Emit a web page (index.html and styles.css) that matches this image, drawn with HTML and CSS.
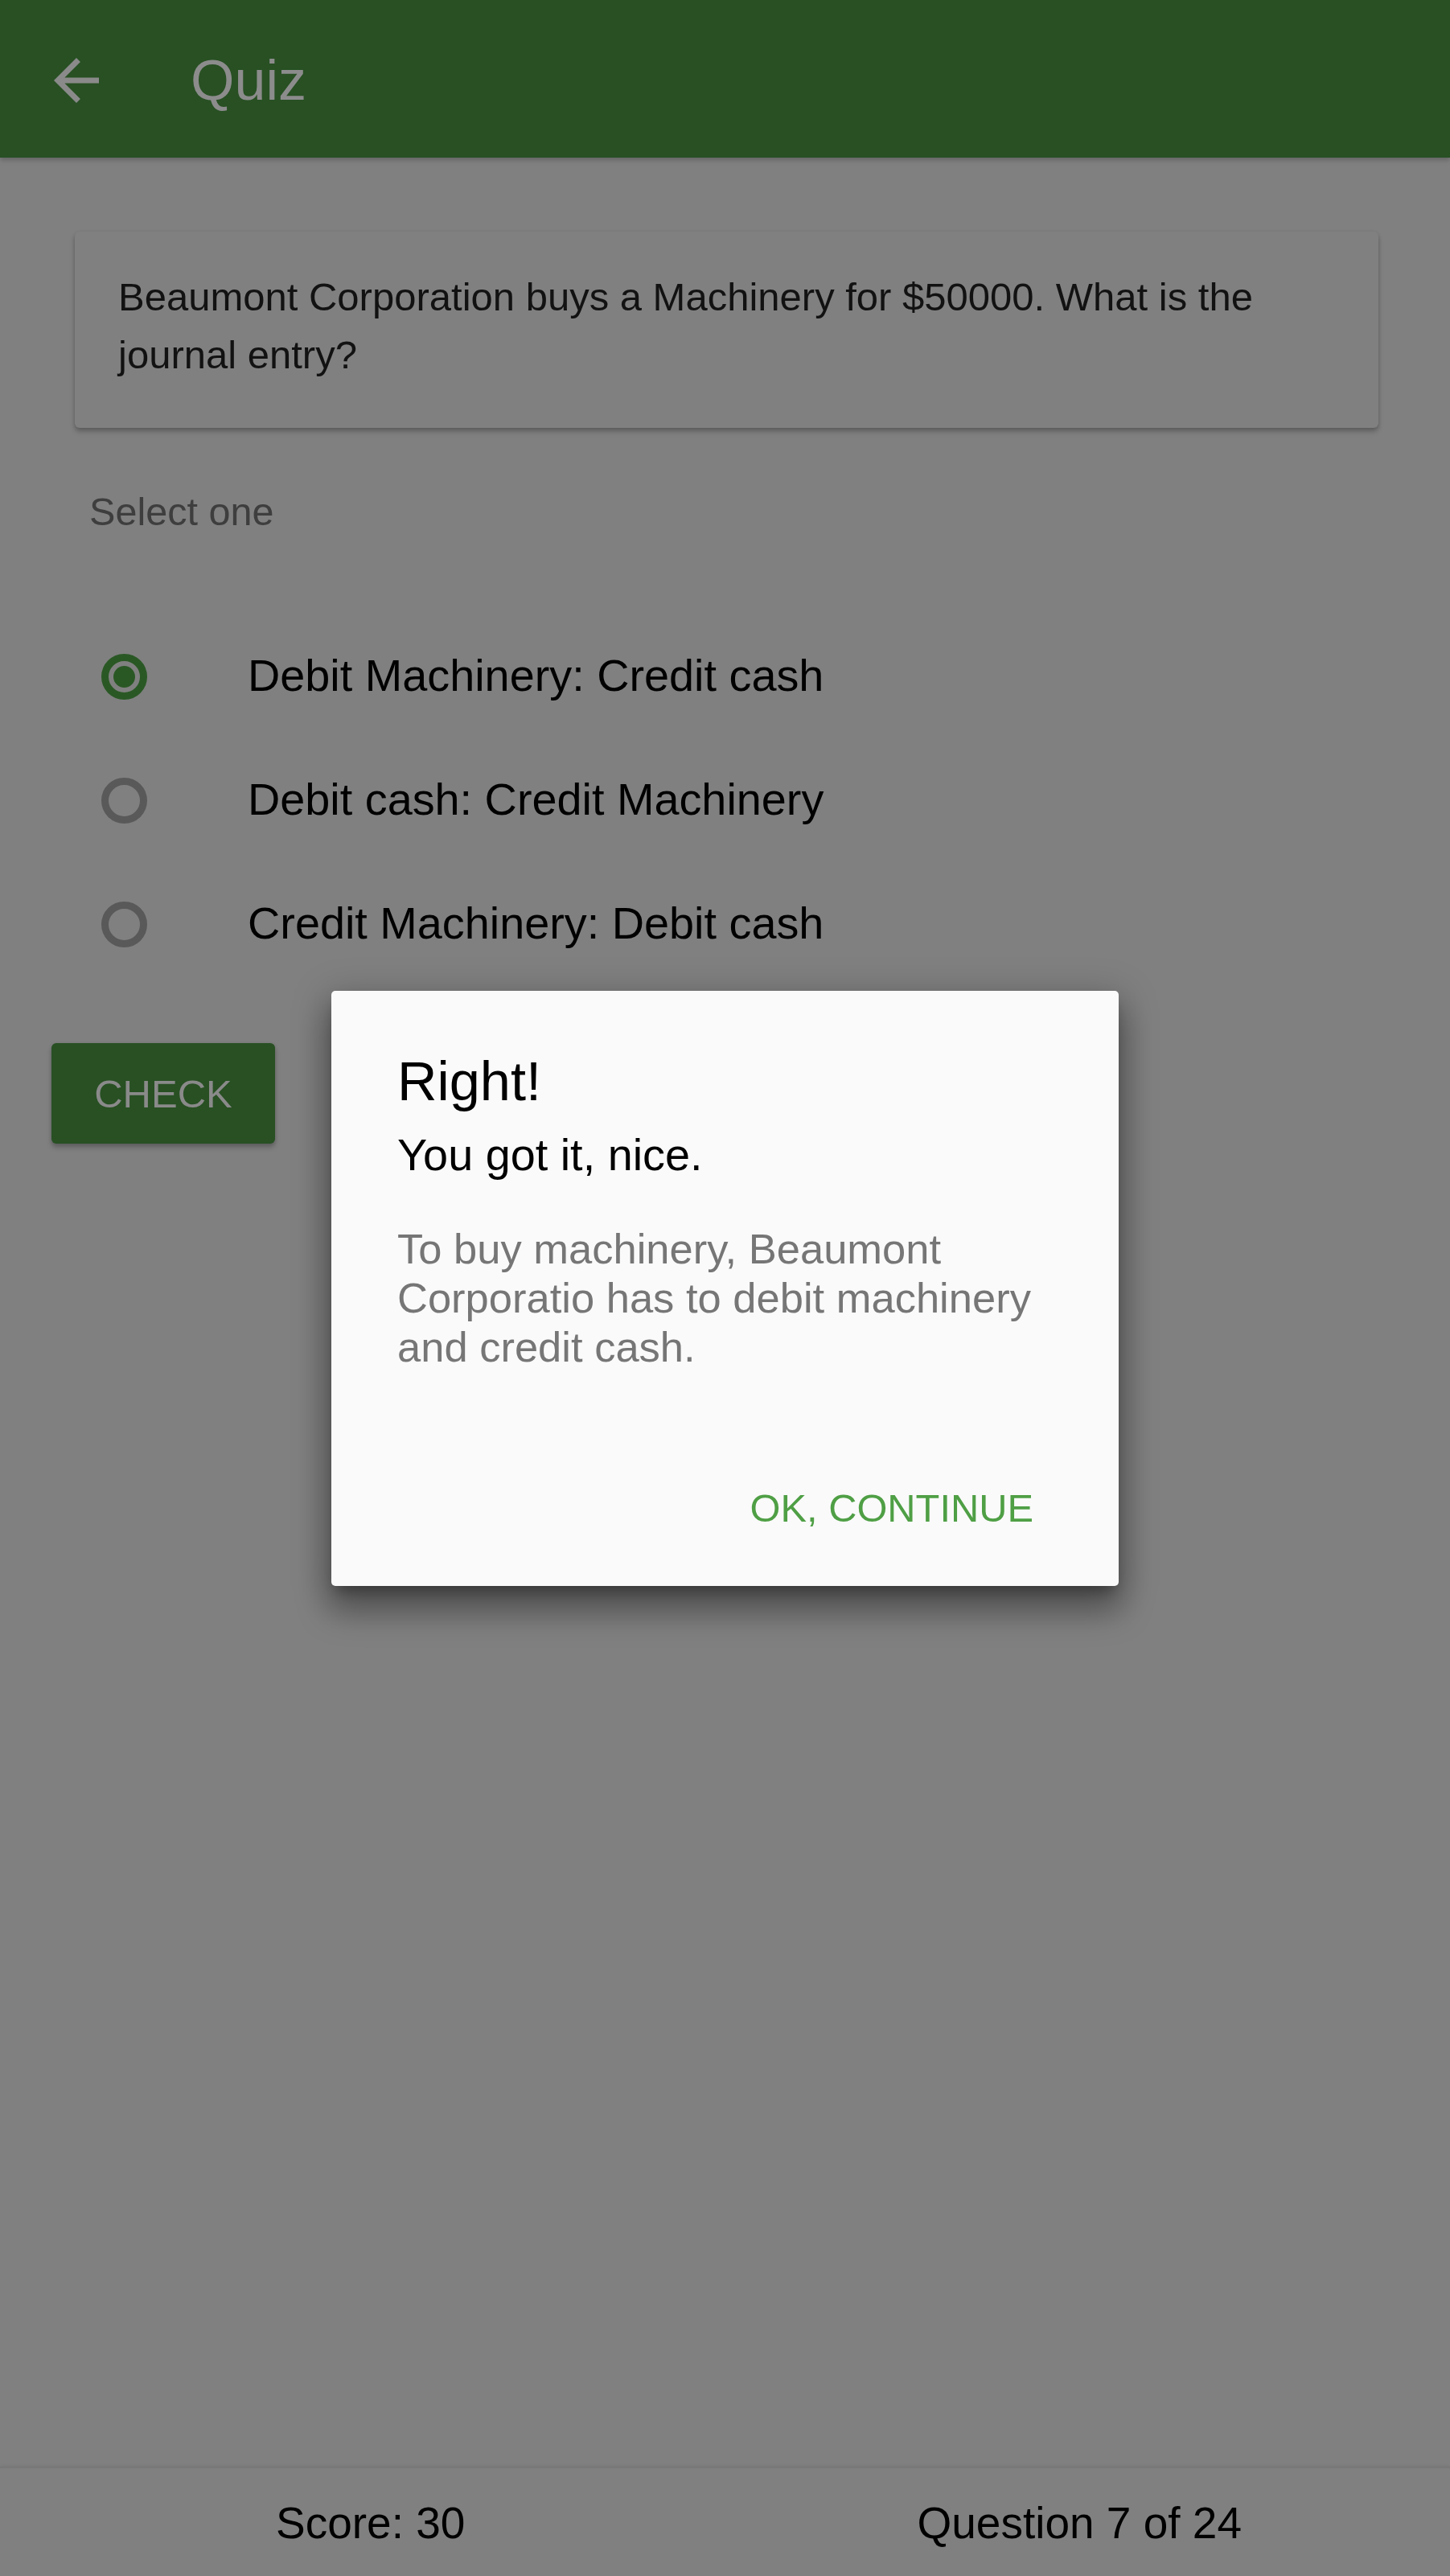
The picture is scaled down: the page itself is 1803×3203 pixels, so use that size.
FILE: index.html
```html
<!DOCTYPE html>
<html lang="en">
<head>
<meta charset="utf-8">
<title>Quiz</title>
<link rel="stylesheet" href="styles.css">
</head>
<body>
<div class="app">
  <header class="toolbar">
    <svg class="back-icon" viewBox="0 0 24 24" width="84" height="84" aria-hidden="true">
      <path d="M20 11H7.83l5.59-5.59L12 4l-8 8 8 8 1.41-1.41L7.83 13H20v-2z" fill="currentColor"/>
    </svg>
    <h1 class="toolbar-title">Quiz</h1>
  </header>

  <main class="content">
    <section class="question-card">
      <p class="question-text">Beaumont Corporation buys a Machinery for $50000. What is the journal entry?</p>
    </section>

    <p class="select-label">Select one</p>

    <ul class="options">
      <li class="option">
        <span class="radio radio-checked"><span class="radio-dot"></span></span>
        <span class="option-text">Debit Machinery: Credit cash</span>
      </li>
      <li class="option">
        <span class="radio"></span>
        <span class="option-text">Debit cash: Credit Machinery</span>
      </li>
      <li class="option">
        <span class="radio"></span>
        <span class="option-text">Credit Machinery: Debit cash</span>
      </li>
    </ul>

    <button class="check-button" type="button">CHECK</button>
  </main>

  <footer class="footer">
    <span class="footer-item">Score: 30</span>
    <span class="footer-item">Question 7 of 24</span>
  </footer>
</div>

<div class="backdrop">
  <div class="dialog" role="dialog">
    <h2 class="dialog-title">Right!</h2>
    <p class="dialog-subtitle">You got it, nice.</p>
    <p class="dialog-body">To buy machinery, Beaumont Corporatio has to debit machinery and credit cash.</p>
    <div class="dialog-actions">
      <button class="dialog-button" type="button">OK, CONTINUE</button>
    </div>
  </div>
</div>
</body>
</html>
```

FILE: styles.css
```css
* {
  box-sizing: border-box;
}

html, body {
  margin: 0;
  padding: 0;
}

body {
  font-family: "Liberation Sans", Arial, sans-serif;
  background: #808080;
  color: #000;
}

.app {
  display: flex;
  flex-direction: column;
  min-height: 100vh;
}

/* Toolbar */
.toolbar {
  height: 196px;
  background: #285023;
  display: flex;
  align-items: center;
  padding: 4px 0 0 53px;
  box-shadow: 0 3px 6px rgba(0, 0, 0, 0.22);
  position: relative;
  z-index: 1;
}

.back-icon {
  color: #8a8a8a;
  flex: none;
}

.toolbar-title {
  margin: 0 0 0 100px;
  font-weight: normal;
  font-size: 70px;
  line-height: 80px;
  color: #8c8c8c;
}

/* Content */
.content {
  display: flex;
  flex-direction: column;
  align-items: flex-start;
}

.question-card {
  margin: 92px 0 0 93px;
  width: 1621px;
  padding: 45px 50px 55px 54px;
  border-radius: 6px;
  background: #808080;
  box-shadow: 0 5px 6px rgba(0, 0, 0, 0.22), 0 1px 4px rgba(0, 0, 0, 0.12);
}

.question-text {
  margin: 0;
  font-size: 49px;
  line-height: 72px;
  color: #121212;
}

.select-label {
  margin: 74px 0 0 111px;
  font-size: 48.6px;
  line-height: 60px;
  color: #3e3e3e;
}

.options {
  list-style: none;
  margin: 97px 0 0;
  padding: 0;
}

.option {
  height: 154px;
  display: flex;
  align-items: center;
  padding-left: 126px;
}

.radio {
  flex: none;
  width: 57px;
  height: 57px;
  border: 9px solid #595959;
  border-radius: 50%;
  display: flex;
  align-items: center;
  justify-content: center;
  margin-top: 3px;
}

.radio-checked {
  border-color: #2a5825;
}

.radio-dot {
  width: 27px;
  height: 27px;
  border-radius: 50%;
  background: #2a5825;
}

.option-text {
  margin-left: 125px;
  font-size: 55.8px;
  line-height: 64px;
  color: #000;
}

.check-button {
  margin: 72px 0 0 64px;
  height: 125px;
  width: 278px;
  padding: 0;
  border: none;
  border-radius: 6px;
  background: #285023;
  color: #8a8a8a;
  font-family: "Liberation Sans", Arial, sans-serif;
  font-size: 49px;
  box-shadow: 0 5px 6px rgba(0, 0, 0, 0.22), 0 1px 4px rgba(0, 0, 0, 0.12);
}

/* Footer */
.footer {
  margin-top: auto;
  height: 136px;
  padding: 0 20px;
  display: grid;
  grid-template-columns: 1fr 1fr;
  align-items: center;
  border-top: 2px solid #787878;
  box-shadow: 0 -1px 4px rgba(0, 0, 0, 0.08);
}

.footer-item {
  text-align: center;
  font-size: 55px;
  line-height: 64px;
  color: #000;
  padding-top: 2px;
}

/* Dialog */
.backdrop {
  position: fixed;
  inset: 0;
  display: flex;
  align-items: center;
  justify-content: center;
}

.dialog {
  width: 979px;
  background: #fafafa;
  border-radius: 5px;
  padding: 73px 82px 69px;
  box-shadow: 0 30px 40px 4px rgba(0, 0, 0, 0.28),
              0 10px 46px 8px rgba(0, 0, 0, 0.2),
              0 12px 16px -6px rgba(0, 0, 0, 0.3);
}

.dialog-title {
  margin: 0;
  font-weight: normal;
  font-size: 68.5px;
  line-height: 80px;
  color: #000;
}

.dialog-subtitle {
  margin: 19px 0 0;
  font-size: 55.8px;
  line-height: 64px;
  color: #000;
}

.dialog-body {
  margin: 54px 0 0;
  font-size: 52.5px;
  line-height: 61px;
  color: #767676;
}

.dialog-actions {
  margin-top: 142px;
  display: flex;
  justify-content: flex-end;
  padding-right: 24px;
}

.dialog-button {
  border: none;
  background: none;
  padding: 0;
  font-family: "Liberation Sans", Arial, sans-serif;
  font-size: 48.8px;
  line-height: 56px;
  color: #4f9f45;
}
```
